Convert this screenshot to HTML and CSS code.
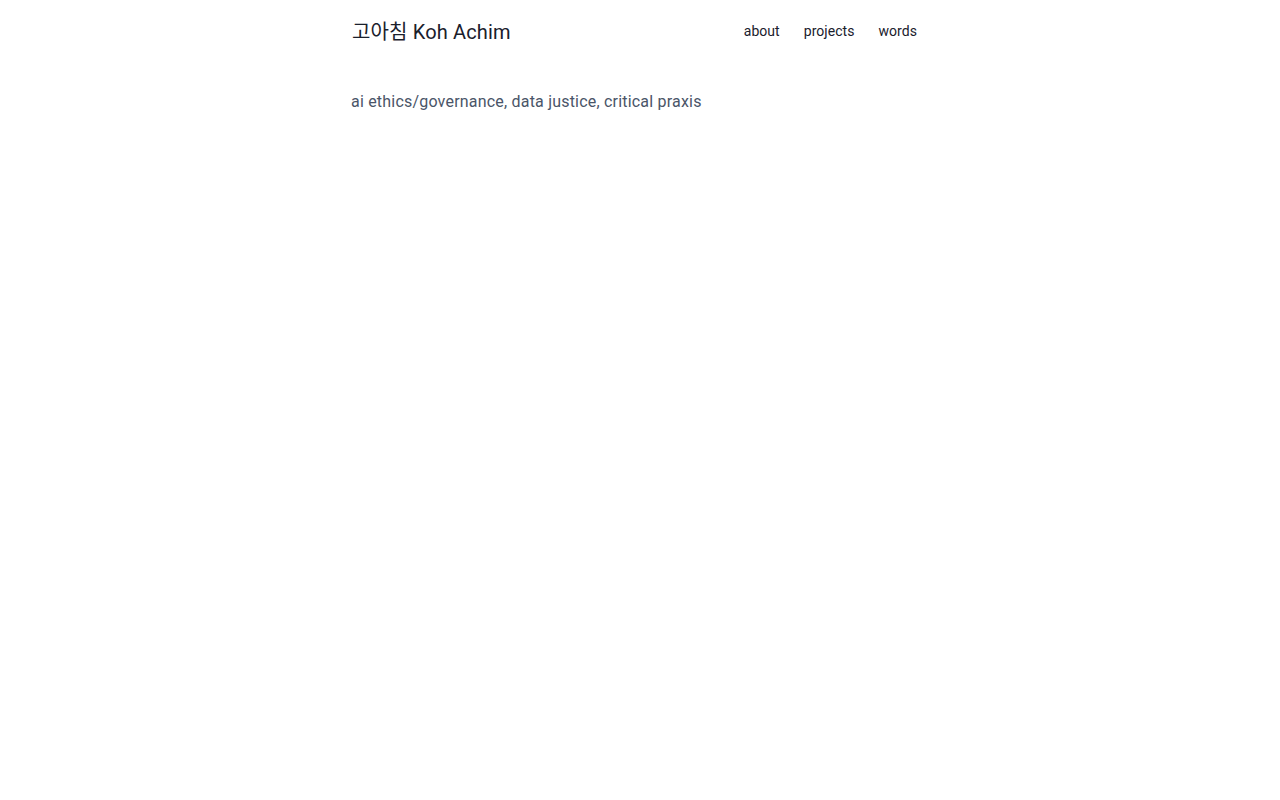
FILE: index.html
```
<!DOCTYPE html>
<html lang="ko">
<head>
<meta charset="utf-8">
<title>고아침 Koh Achim</title>
<link rel="stylesheet" href="styles.css">
</head>
<body>
<div class="wrap">
  <header class="top">
    <a class="brand" href="#">고아침 Koh Achim</a>
    <nav class="nav">
      <a href="#">about</a>
      <a href="#">projects</a>
      <a href="#">words</a>
    </nav>
  </header>
  <p class="tagline">ai ethics/governance, data justice, critical praxis</p>
</div>
</body>
</html>
```

FILE: styles.css
```
html, body {
  margin: 0;
  padding: 0;
  background: #ffffff;
}
body {
  font-family: Roboto, "Noto Sans CJK KR", sans-serif;
  color: #1a202c;
}
.wrap {
  width: 576px;
  margin: 0 auto;
  padding-top: 16px;
}
.top {
  display: flex;
  align-items: center;
  justify-content: space-between;
  padding-right: 11px;
}
.brand {
  font-size: 20px;
  letter-spacing: 0.15px;
  color: #1a202c;
  text-decoration: none;
}
.nav {
  display: flex;
  gap: 24px;
}
.nav a {
  font-size: 14px;
  letter-spacing: 0.05px;
  color: #1a202c;
  text-decoration: none;
}
.tagline {
  margin: 47px 0 0 -1px;
  font-size: 16px;
  letter-spacing: 0.2px;
  color: #4a5568;
}
```
